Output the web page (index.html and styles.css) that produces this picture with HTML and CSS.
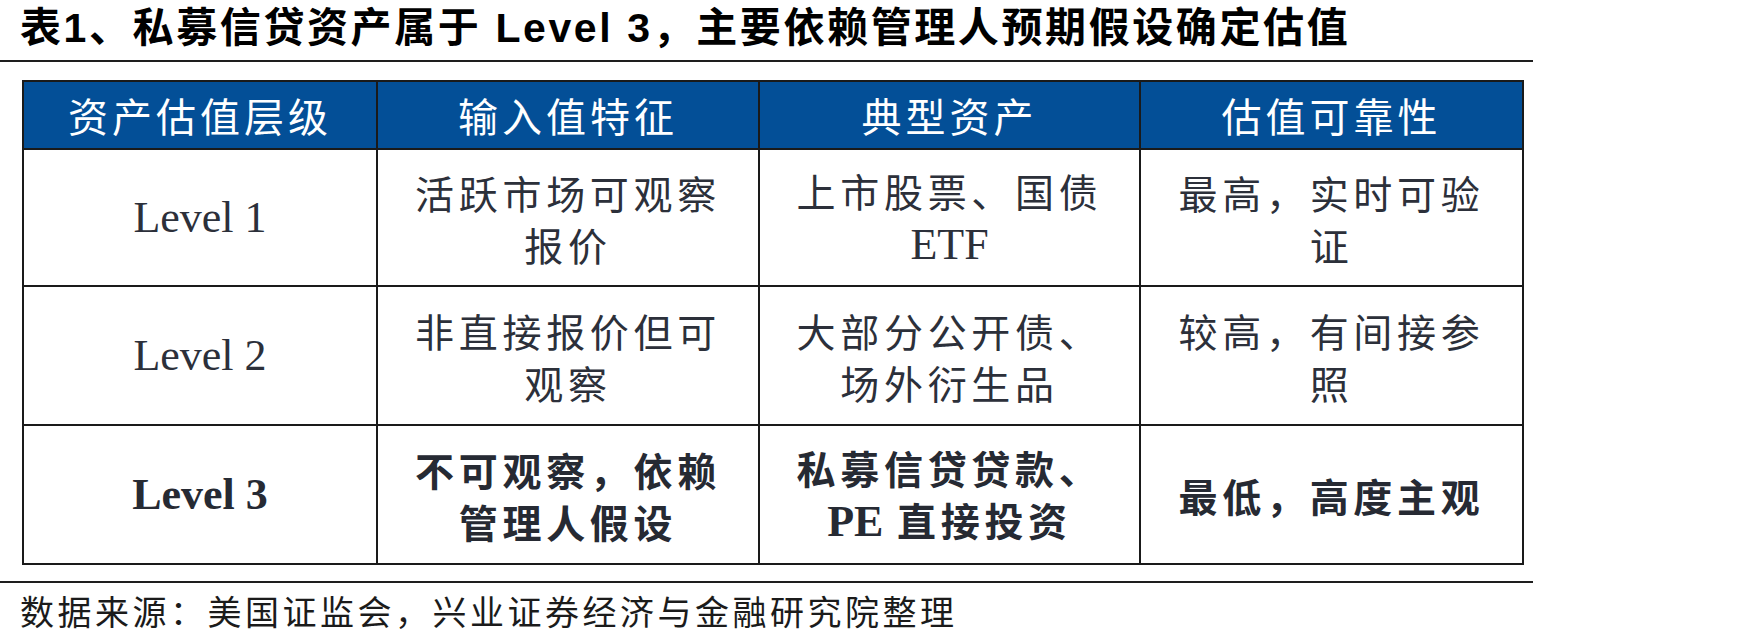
FILE: index.html
```html
<!DOCTYPE html>
<html lang="zh-CN">
<head>
<meta charset="utf-8">
<link rel="stylesheet" href="styles.css">
</head>
<body>
<div class="page">
  <h1 class="title">表1、私募信贷资产属于 Level 3，主要依赖管理人预期假设确定估值</h1>
  <div class="rule"></div>
  <table class="grid">
    <colgroup>
      <col class="c1"><col class="c2"><col class="c3"><col class="c4">
    </colgroup>
    <thead>
      <tr><th>资产估值层级</th><th>输入值特征</th><th>典型资产</th><th>估值可靠性</th></tr>
    </thead>
    <tbody>
      <tr class="r1">
        <td class="lvl">Level 1</td>
        <td>活跃市场可观察<br>报价</td>
        <td>上市股票、国债<br><span class="ser">ETF</span></td>
        <td>最高，实时可验<br>证</td>
      </tr>
      <tr>
        <td class="lvl">Level 2</td>
        <td>非直接报价但可<br>观察</td>
        <td>大部分公开债、<br>场外衍生品</td>
        <td>较高，有间接参<br>照</td>
      </tr>
      <tr class="strong">
        <td class="lvl">Level 3</td>
        <td>不可观察，依赖<br>管理人假设</td>
        <td>私募信贷贷款、<br><span class="ser">PE</span> 直接投资</td>
        <td>最低，高度主观</td>
      </tr>
    </tbody>
  </table>
  <div class="rule rule2"></div>
  <p class="source">数据来源：美国证监会，兴业证券经济与金融研究院整理</p>
</div>
</body>
</html>
```

FILE: styles.css
```css
html, body {
  margin: 0;
  padding: 0;
  background: #ffffff;
}
.page {
  width: 1748px;
  min-height: 641px;
  font-family: "Noto Sans CJK SC", "Liberation Sans", sans-serif;
}
.title {
  margin: 0;
  padding: 3px 0 7px 20px;
  font-family: "Liberation Sans", "Noto Sans CJK SC", sans-serif;
  font-size: 41px;
  line-height: 50px;
  font-weight: 700;
  letter-spacing: 2.6px;
  color: #000;
  white-space: nowrap;
}
.rule {
  width: 1533px;
  height: 2px;
  background: #1e1e1e;
}
.grid {
  margin: 18px 0 0 22px;
  width: 1500px;
  table-layout: fixed;
  border-collapse: collapse;
  border: 2px solid #1a1a1a;
}
.c1 { width: 354px; }
.c2 { width: 382px; }
.c3 { width: 381px; }
.c4 { width: 383px; }
.grid th {
  height: 66px;
  padding: 0;
  background: #034f97;
  color: #ffffff;
  font-size: 40px;
  font-weight: 400;
  letter-spacing: 4px;
  line-height: 50px;
  border: 2px solid #1a1a1a;
  text-align: center;
  vertical-align: middle;
}
.grid td {
  height: 137px;
  padding: 0;
  border: 2px solid #1a1a1a;
  text-align: center;
  vertical-align: middle;
  font-size: 39px;
  line-height: 52px;
  letter-spacing: 4.7px;
  color: #2c303a;
  font-weight: 400;
}
.grid .r1 td {
  height: 135px;
}
.grid td.lvl {
  font-family: "Liberation Serif", serif;
  font-size: 44px;
  letter-spacing: 0;
}
.ser {
  font-family: "Liberation Serif", serif;
  font-size: 44px;
  letter-spacing: 0;
}
.strong td {
  font-weight: 700;
  color: #262a33;
}
.rule2 {
  margin-top: 16px;
}
.source {
  margin: 6px 0 0 20px;
  font-size: 34px;
  line-height: 44px;
  letter-spacing: 3.5px;
  color: #1b1b1b;
  white-space: nowrap;
}
```
